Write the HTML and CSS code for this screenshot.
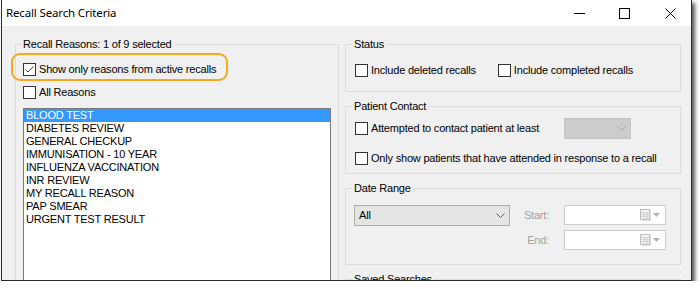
FILE: index.html
```html
<!DOCTYPE html>
<html>
<head>
<meta charset="utf-8">
<title>Recall Search Criteria</title>
<link rel="stylesheet" href="styles.css">
</head>
<body>
<div class="window">
  <div class="titlebar">
    <span class="title">Recall Search Criteria</span>
    <div class="controls">
      <span class="ctl ctl-min"><svg width="11" height="11" viewBox="0 0 11 11"><line x1="0" y1="5.5" x2="11" y2="5.5" stroke="#000" stroke-width="1"/></svg></span>
      <span class="ctl ctl-max"><svg width="11" height="11" viewBox="0 0 11 11"><rect x="0.5" y="0.5" width="10" height="10" fill="none" stroke="#000" stroke-width="1"/></svg></span>
      <span class="ctl ctl-close"><svg width="11" height="11" viewBox="0 0 11 11"><path d="M0.5 0.5 L10.5 10.5 M10.5 0.5 L0.5 10.5" stroke="#000" stroke-width="1" fill="none"/></svg></span>
    </div>
  </div>
  <div class="client">
    <fieldset class="group reasons">
      <legend>Recall Reasons: 1 of 9 selected</legend>
      <div class="group-body reasons-body">
        <label class="check"><span class="box"><svg width="11" height="11" viewBox="0 0 11 11"><polyline points="1.5,5.5 4,8 9.5,2.5" fill="none" stroke="#3c3c3c" stroke-width="1"/></svg></span><span class="lbl">Show only reasons from active recalls</span></label>
        <label class="check row2"><span class="box"></span><span class="lbl">All Reasons</span></label>
        <ul class="listbox">
          <li class="sel">BLOOD TEST</li>
          <li>DIABETES REVIEW</li>
          <li>GENERAL CHECKUP</li>
          <li>IMMUNISATION - 10 YEAR</li>
          <li>INFLUENZA VACCINATION</li>
          <li>INR REVIEW</li>
          <li>MY RECALL REASON</li>
          <li>PAP SMEAR</li>
          <li>URGENT TEST RESULT</li>
        </ul>
      </div>
    </fieldset>
    <div class="annot"></div>
    <div class="right-col">
      <fieldset class="group status">
        <legend>Status</legend>
        <div class="group-body status-body">
          <label class="check"><span class="box"></span><span class="lbl">Include deleted recalls</span></label>
          <label class="check"><span class="box"></span><span class="lbl">Include completed recalls</span></label>
        </div>
      </fieldset>
      <fieldset class="group contact">
        <legend>Patient Contact</legend>
        <div class="group-body contact-body">
          <div class="contact-row">
            <label class="check"><span class="box"></span><span class="lbl">Attempted to contact patient at least</span></label>
            <div class="combo combo-disabled"><span class="combo-text"></span><span class="combo-arrow"><svg width="9" height="5" viewBox="0 0 9 5"><polyline points="0.5,0.5 4.5,4.5 8.5,0.5" fill="none" stroke="#a6a6a6" stroke-width="1"/></svg></span></div>
          </div>
          <label class="check row-attended"><span class="box"></span><span class="lbl">Only show patients that have attended in response to a recall</span></label>
        </div>
      </fieldset>
      <fieldset class="group dates">
        <legend>Date Range</legend>
        <div class="group-body dates-body">
          <div class="combo combo-all"><span class="combo-text">All</span><span class="combo-arrow"><svg width="9" height="5" viewBox="0 0 9 5"><polyline points="0.5,0.5 4.5,4.5 8.5,0.5" fill="none" stroke="#5a5a5a" stroke-width="1"/></svg></span></div>
          <span class="dlabel">Start:</span>
          <div class="datefield">
            <svg class="cal" width="11" height="12" viewBox="0 0 11 12"><rect x="0.5" y="0.5" width="9" height="10" fill="#f4f4f4" stroke="#bdbdbd"/><path d="M1 3.5H10M1 5.5H10M1 7.5H10M3.5 3V10.5M5.5 3V10.5M7.5 3V10.5" stroke="#d6d6d6" stroke-width="1"/><path d="M10.5 1.5V11.5H1.5" fill="none" stroke="#dedede"/></svg>
            <svg class="tri" width="7" height="4" viewBox="0 0 7 4"><polygon points="0,0 7,0 3.5,4" fill="#b4b4b4"/></svg>
          </div>
          <span class="dlabel">End:</span>
          <div class="datefield end">
            <svg class="cal" width="11" height="12" viewBox="0 0 11 12"><rect x="0.5" y="0.5" width="9" height="10" fill="#f4f4f4" stroke="#bdbdbd"/><path d="M1 3.5H10M1 5.5H10M1 7.5H10M3.5 3V10.5M5.5 3V10.5M7.5 3V10.5" stroke="#d6d6d6" stroke-width="1"/><path d="M10.5 1.5V11.5H1.5" fill="none" stroke="#dedede"/></svg>
            <svg class="tri" width="7" height="4" viewBox="0 0 7 4"><polygon points="0,0 7,0 3.5,4" fill="#b4b4b4"/></svg>
          </div>
        </div>
      </fieldset>
      <fieldset class="group saved">
        <legend>Saved Searches</legend>
        <div class="group-body"></div>
      </fieldset>
    </div>
  </div>
</div>
</body>
</html>
```
FILE: styles.css
```css
* { box-sizing: border-box; }
html, body { margin: 0; padding: 0; background: #fff; }
body {
  font-family: "Liberation Sans", Arial, sans-serif;
  font-size: 11px;
  letter-spacing: -0.2px;
  color: #000;
}
.window {
  margin-left: 1px;
  width: 691px;
  height: 281px;
  border: 1px solid #2b2b2b;
  border-top: 0;
  background: #f0f0f0;
  box-shadow: 3px 3px 4px rgba(0, 0, 0, 0.65);
  overflow: hidden;
  display: flex;
  flex-direction: column;
}
.titlebar {
  height: 26px;
  flex: none;
  background: #fff;
  display: flex;
  align-items: center;
  padding-left: 4px;
}
.title {
  font-family: "Noto Sans", sans-serif;
  font-size: 11.5px;
  letter-spacing: -0.15px;
  line-height: 16px;
  color: #000;
}
.controls {
  margin-left: auto;
  display: flex;
  align-items: center;
  padding-right: 15px;
}
.ctl { display: block; width: 11px; height: 11px; }
.ctl svg { display: block; }
.ctl-max { margin-left: 34px; }
.ctl-close { margin-left: 35px; }

.client {
  flex: 1;
  min-height: 0;
  position: relative;
  display: grid;
  grid-template-columns: 324px 336px;
  column-gap: 6px;
  align-items: start;
  padding: 12px 10px 0 13px;
}
.group {
  margin: 0;
  padding: 0;
  min-width: 0;
  border: 1px solid #dcdcdc;
}
.group legend {
  margin-left: 6px;
  padding: 0 2px;
  font-size: 11px;
  line-height: 13px;
}
.reasons { height: 270px; }
.reasons legend { margin-left: 5px; }
.reasons-body { padding: 12px 7px 0 7px; }

.check {
  display: flex;
  align-items: center;
  height: 13px;
  line-height: 13px;
  white-space: nowrap;
}
.box {
  width: 13px;
  height: 13px;
  flex: none;
  border: 1px solid #333;
  background: #fff;
  display: flex;
  align-items: center;
  justify-content: center;
}
.box svg { display: block; }
.lbl { margin-left: 3px; }
.row2 { margin-top: 10px; }

.listbox {
  list-style: none;
  margin: 9px 0 0 0;
  padding: 0;
  height: 200px;
  background: #fff;
  border: 1px solid #7a7a7a;
}
.listbox li {
  height: 13px;
  line-height: 13px;
  padding-left: 2px;
  white-space: nowrap;
}
.listbox li.sel { background: #3399ff; color: #fff; }

.annot {
  position: absolute;
  left: 9px;
  top: 27px;
  width: 217px;
  height: 28px;
  border: 2px solid #f7a81e;
  border-radius: 9px;
  pointer-events: none;
}

.right-col {
  display: flex;
  flex-direction: column;
  gap: 8px;
}
.status-body {
  display: flex;
  padding: 13px 9px 14px 9px;
}
.status-body .check + .check { margin-left: 22px; }

.contact-body { padding: 5px 9px 8px 9px; }
.contact-row {
  display: grid;
  grid-template-columns: 209px 67px;
  align-items: center;
  height: 21px;
}
.row-attended { margin-top: 13px; }

.combo {
  height: 21px;
  display: flex;
  align-items: center;
  border: 1px solid #adadad;
  background: #e5e5e5;
}
.combo-disabled { background: #cccccc; border-color: #c2c2c2; }
.combo-text { flex: 1; padding-left: 4px; line-height: 13px; }
.combo-arrow {
  width: 17px;
  flex: none;
  display: flex;
  justify-content: center;
  align-items: center;
}
.combo-arrow svg { display: block; }

.dates-body {
  display: grid;
  grid-template-columns: 156px 54px 102px;
  grid-template-rows: 21px 20px;
  row-gap: 4px;
  padding: 10px 8px 14px 8px;
}
.combo-all { grid-column: 1; grid-row: 1; }
.dlabel {
  grid-column: 2;
  text-align: right;
  padding-right: 15px;
  color: #a0a0a0;
  align-self: center;
  line-height: 13px;
}
.datefield {
  grid-column: 3;
  height: 20px;
  border: 1px solid #cccccc;
  background: #fff;
  display: flex;
  align-items: center;
  justify-content: flex-end;
  padding-right: 5px;
}
.datefield .cal { display: block; margin-right: 2px; }
.datefield .tri { display: block; }
.saved { height: 40px; }
```
